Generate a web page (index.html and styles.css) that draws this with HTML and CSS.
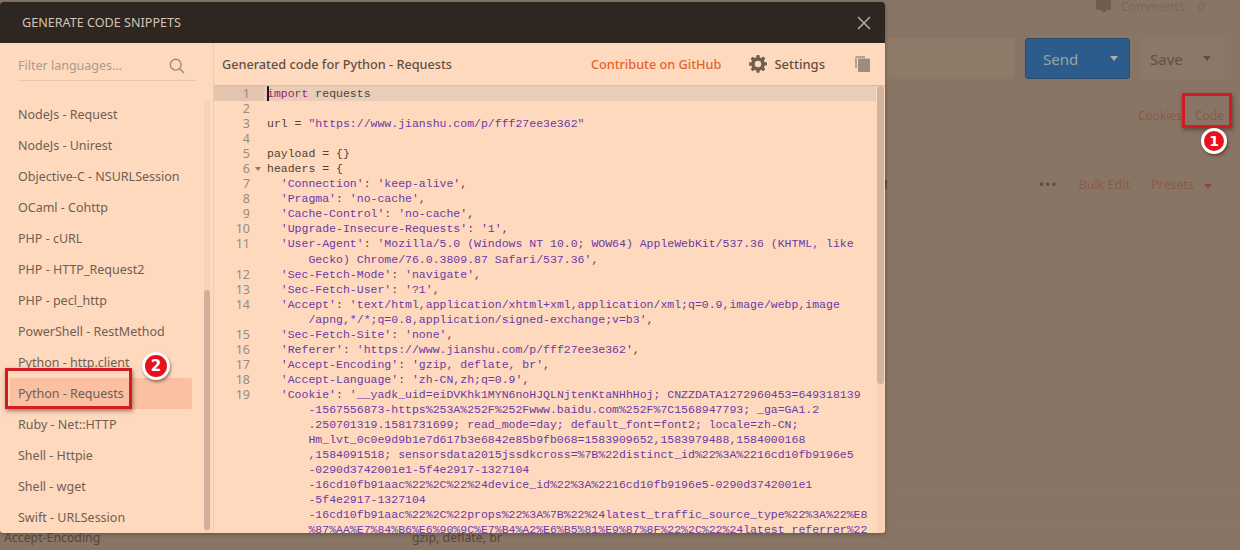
FILE: index.html
```html
<!DOCTYPE html>
<html lang="en">
<head>
<meta charset="utf-8">
<title>Generate code snippets</title>
<link rel="stylesheet" href="styles.css">
</head>
<body>
<div class="page">
  <div class="bg-comments">
    <svg class="bg-comment-icon" width="18" height="14" viewBox="0 0 18 14"><path d="M0 0h15v10l-4 0-3 3-3-3H0z" transform="translate(1 0)" fill="#6f5e50"/></svg>
    <span>Comments</span><span class="bg-count">0</span>
  </div>
  <div class="bg-actions">
    <div class="bg-url"></div>
    <div class="bg-send"><span>Send</span><i class="caret caret-light"></i></div>
    <div class="bg-save"><span>Save</span><i class="caret caret-dark"></i></div>
  </div>
  <div class="bg-links"><span>Cookies</span><span>Code</span></div>
  <div class="bg-tools">
    <i class="bg-sliver"></i><span class="bg-dots">•••</span><span>Bulk Edit</span><span class="bg-presets">Presets<i class="caret caret-red"></i></span>
  </div>
  <div class="bg-rule bg-rule-a"></div>
  <div class="bg-rule bg-rule-b"></div>
  <div class="bg-row"><span class="bg-key">Accept-Encoding</span><span>gzip, deflate, br</span></div>
</div>

<section class="modal">
  <header class="modal-head">
    <h1>GENERATE CODE SNIPPETS</h1>
    <svg class="close" width="14" height="14" viewBox="0 0 14 14"><path d="M1 1l12 12M13 1L1 13" stroke="#b7aca2" stroke-width="1.5" fill="none"/></svg>
  </header>
  <div class="modal-body">
    <aside class="side">
      <div class="filter">
        <span>Filter languages...</span>
        <svg width="16" height="16" viewBox="0 0 16 16"><circle cx="6.7" cy="6.7" r="5.4" fill="none" stroke="#9a8c80" stroke-width="1.4"/><path d="M10.7 10.7l4.3 4.3" stroke="#9a8c80" stroke-width="1.5"/></svg>
      </div>
      <div class="lang-wrap">
        <ul class="langs">
          <li>NodeJs - Request</li>
          <li>NodeJs - Unirest</li>
          <li>Objective-C - NSURLSession</li>
          <li>OCaml - Cohttp</li>
          <li>PHP - cURL</li>
          <li>PHP - HTTP_Request2</li>
          <li>PHP - pecl_http</li>
          <li>PowerShell - RestMethod</li>
          <li>Python - http.client</li>
          <li class="active">Python - Requests</li>
          <li>Ruby - Net::HTTP</li>
          <li>Shell - Httpie</li>
          <li>Shell - wget</li>
          <li>Swift - URLSession</li>
        </ul>
        <div class="side-scroll"><div class="side-thumb"></div></div>
      </div>
    </aside>
    <main class="main">
      <div class="main-head">
        <span class="gen-title">Generated code for Python - Requests</span>
        <a class="contrib">Contribute on GitHub</a>
        <span class="settings">
          <svg width="18" height="18" viewBox="0 0 18 18"><path fill="#6f5f52" fill-rule="evenodd" d="M7.6 0h2.8l.4 2.4 1.5.6 2-1.4 2 2-1.4 2 .6 1.5 2.4.4v2.8l-2.4.4-.6 1.5 1.4 2-2 2-2-1.4-1.5.6-.4 2.4H7.6l-.4-2.4-1.500-.6-2 1.400-2-2 1.400-2-.6-1.500L0 10.400V7.600l2.400-.4.6-1.500-1.400-2 2-2 2 1.400 1.500-.6zM9 5.800a3.200 3.200 0 1 0 0 6.400a3.200 3.200 0 0 0 0-6.400z"/></svg>
          <span>Settings</span>
        </span>
        <svg class="copy" width="15" height="16" viewBox="0 0 15 16"><path d="M3 0h8v2H3v10H1V2a2 2 0 0 1 2-2z" fill="#b5a392" transform="translate(-1 0)"/><rect x="3" y="2.500" width="12" height="13.500" rx="1" fill="#a08c7c"/></svg>
      </div>
      <div class="editor">
        <div class="code">
          <div class="ln current"><b>1</b><code><span class="cursor"></span><span class="kw">import</span> requests</code></div>
          <div class="ln"><b>2</b><code></code></div>
          <div class="ln"><b>3</b><code>url = <span class="str">"https://www.jianshu.com/p/fff27ee3e362"</span></code></div>
          <div class="ln"><b>4</b><code></code></div>
          <div class="ln"><b>5</b><code>payload = {}</code></div>
          <div class="ln fold"><b>6</b><code>headers = {</code></div>
          <div class="ln"><b>7</b><code>  <span class="str">'Connection'</span>: <span class="str">'keep-alive'</span>,</code></div>
          <div class="ln"><b>8</b><code>  <span class="str">'Pragma'</span>: <span class="str">'no-cache'</span>,</code></div>
          <div class="ln"><b>9</b><code>  <span class="str">'Cache-Control'</span>: <span class="str">'no-cache'</span>,</code></div>
          <div class="ln"><b>10</b><code>  <span class="str">'Upgrade-Insecure-Requests'</span>: <span class="str">'1'</span>,</code></div>
          <div class="ln"><b>11</b><code>  <span class="str">'User-Agent'</span>: <span class="str">'Mozilla/5.0 (Windows NT 10.0; WOW64) AppleWebKit/537.36 (KHTML, like</span></code></div>
          <div class="ln"><b></b><code>      <span class="str">Gecko) Chrome/76.0.3809.87 Safari/537.36'</span>,</code></div>
          <div class="ln"><b>12</b><code>  <span class="str">'Sec-Fetch-Mode'</span>: <span class="str">'navigate'</span>,</code></div>
          <div class="ln"><b>13</b><code>  <span class="str">'Sec-Fetch-User'</span>: <span class="str">'?1'</span>,</code></div>
          <div class="ln"><b>14</b><code>  <span class="str">'Accept'</span>: <span class="str">'text/html,application/xhtml+xml,application/xml;q=0.9,image/webp,image</span></code></div>
          <div class="ln"><b></b><code>      <span class="str">/apng,*/*;q=0.8,application/signed-exchange;v=b3'</span>,</code></div>
          <div class="ln"><b>15</b><code>  <span class="str">'Sec-Fetch-Site'</span>: <span class="str">'none'</span>,</code></div>
          <div class="ln"><b>16</b><code>  <span class="str">'Referer'</span>: <span class="str">'https://www.jianshu.com/p/fff27ee3e362'</span>,</code></div>
          <div class="ln"><b>17</b><code>  <span class="str">'Accept-Encoding'</span>: <span class="str">'gzip, deflate, br'</span>,</code></div>
          <div class="ln"><b>18</b><code>  <span class="str">'Accept-Language'</span>: <span class="str">'zh-CN,zh;q=0.9'</span>,</code></div>
          <div class="ln"><b>19</b><code>  <span class="str">'Cookie'</span>: <span class="str">'__yadk_uid=eiDVKhk1MYN6noHJQLNjtenKtaNHhHoj; CNZZDATA1272960453=649318139</span></code></div>
          <div class="ln"><b></b><code>      <span class="str">-1567556873-https%253A%252F%252Fwww.baidu.com%252F%7C1568947793; _ga=GA1.2</span></code></div>
          <div class="ln"><b></b><code>      <span class="str">.250701319.1581731699; read_mode=day; default_font=font2; locale=zh-CN;</span></code></div>
          <div class="ln"><b></b><code>      <span class="str">Hm_lvt_0c0e9d9b1e7d617b3e6842e85b9fb068=1583909652,1583979488,1584000168</span></code></div>
          <div class="ln"><b></b><code>      <span class="str">,1584091518; sensorsdata2015jssdkcross=%7B%22distinct_id%22%3A%2216cd10fb9196e5</span></code></div>
          <div class="ln"><b></b><code>      <span class="str">-0290d3742001e1-5f4e2917-1327104</span></code></div>
          <div class="ln"><b></b><code>      <span class="str">-16cd10fb91aac%22%2C%22%24device_id%22%3A%2216cd10fb9196e5-0290d3742001e1</span></code></div>
          <div class="ln"><b></b><code>      <span class="str">-5f4e2917-1327104</span></code></div>
          <div class="ln"><b></b><code>      <span class="str">-16cd10fb91aac%22%2C%22props%22%3A%7B%22%24latest_traffic_source_type%22%3A%22%E8</span></code></div>
          <div class="ln"><b></b><code>      <span class="str">%87%AA%E7%84%B6%E6%90%9C%E7%B4%A2%E6%B5%81%E9%87%8F%22%2C%22%24latest_referrer%22</span></code></div>
        </div>
        <div class="code-scroll"><div class="code-thumb"></div></div>
      </div>
    </main>
  </div>
</section>

<div class="mark mark-code"></div>
<div class="badge badge-one">1</div>
<div class="mark mark-python"></div>
<div class="badge badge-two">2</div>
</body>
</html>
```
FILE: styles.css
```css
* { box-sizing: border-box; }
html, body { margin: 0; height: 100%; }
body {
  width: 1240px; height: 550px; overflow: hidden; position: relative;
  background: #887565; color: #5f4f43;
  font-family: "Noto Sans", "Open Sans", sans-serif; font-size: 12.5px;
}

/* dimmed page behind the modal */
.page { display: flex; flex-direction: column; height: 550px; padding-right: 15px; }
.bg-comments { display: flex; justify-content: flex-end; align-items: center; gap: 8px; height: 13px; color: #7a6858; font-size: 12.5px; padding-right: 20px; }
.bg-count { margin-left: 5px; }
.bg-actions { display: flex; justify-content: flex-end; gap: 10px; height: 41px; margin-top: 25px; }
.bg-url { width: 130px; background: #8e7a69; }
.bg-send, .bg-save { display: flex; align-items: center; justify-content: space-between; font-size: 15px; }
.bg-send { width: 105px; background: #2c5c8c; color: #9aa59f; border-radius: 3px; border: 1px solid #2a4c6e; padding: 0 11px 0 17px; }
.bg-save { width: 85px; background: #8c7868; color: #5f5045; border-radius: 3px; padding: 0 14px 0 10px; }
.caret { width: 0; height: 0; border: 4px solid transparent; border-bottom: 0; border-top-width: 5px; display: inline-block; }
.caret-light { border-top-color: #a9b0aa; }
.caret-dark { border-top-color: #5f5045; }
.caret-red { border-top-color: #8f4a3d; margin-left: 10px; }
.bg-links { display: flex; justify-content: flex-end; gap: 13px; color: #8a5a4c; margin-top: 28px; height: 18px; line-height: 18px; font-size: 12px; padding-right: 1px; }
.bg-tools { display: flex; justify-content: flex-end; align-items: center; gap: 21px; color: #8a5a4c; margin-top: 50px; height: 18px; font-size: 12.5px; padding-right: 13px; }
.bg-sliver { width: 2px; height: 9px; margin: 0 auto 0 885px; background: #5d4e42; }
.bg-dots { color: #5d4e42; font-size: 14px; letter-spacing: 1px; }
.bg-rule { height: 1px; background: #8c7969; margin: 0 -15px 0 860px; }
.bg-rule-a { margin-top: 295px; }
.bg-rule-b { margin-top: 33px; }
.bg-row { display: flex; margin-top: 6px; padding-left: 4px; color: #55473c; font-size: 12.3px; line-height: 18px; }
.bg-key { width: 408px; }

/* modal */
.modal {
  position: absolute; left: 0; top: 2px; width: 885px; height: 531px;
  display: flex; flex-direction: column; background: #ffd9bd;
  border-radius: 3px; overflow: hidden; box-shadow: 0 1px 4px rgba(50, 40, 30, .45);
}
.modal-head { height: 41px; flex: none; background: #2e2620; display: flex; align-items: center; justify-content: space-between; padding: 0 14px 0 22px; color: #d4c4b6; }
.modal-head h1 { margin: 0; font-size: 12.6px; font-weight: 400; }
.close { display: block; }
.modal-body { flex: 1; display: flex; min-height: 0; }

.side { width: 214px; flex: none; border-right: 1px solid #f0ccb2; display: flex; flex-direction: column; }
.filter { height: 37px; margin: 1px 17px 0 18px; flex: none; display: flex; align-items: center; justify-content: space-between; border-bottom: 1px solid #e8c7ae; color: #ab9a8c; padding-right: 11px; padding-top: 7px; }
.lang-wrap { flex: 1; min-height: 0; display: flex; padding-left: 10px; position: relative; }
.langs { list-style: none; margin: 18px 0 0; padding: 0; width: 182px; flex: none; }
.langs li { height: 31px; line-height: 31px; padding-left: 8px; color: #6f5f52; border-radius: 2px; }
.langs li.active { background: #fbc0a2; }
.side-scroll { width: 6px; margin-left: 12px; margin-top: 19px; background: #f7d2b7; }
.side-thumb { height: 240px; margin-top: 190px; background: #d0b09a; border-radius: 3px; }

.main { flex: 1; min-width: 0; display: flex; flex-direction: column; }
.main-head { height: 42px; flex: none; display: flex; align-items: center; padding: 0 15px 0 8px; color: #5f5045; box-shadow: 0 1px 1px #dcbda6; z-index: 1; }
.gen-title { font-weight: 500; font-size: 12.7px; }
.contrib { margin-left: auto; color: #e2642c; font-weight: 500; font-size: 12.7px; }
.settings { display: flex; align-items: center; gap: 7px; margin-left: 28px; font-weight: 500; font-size: 13px; }
.copy { margin-left: 30px; }

.editor { flex: 1; min-height: 0; display: flex; padding-top: 1px; overflow: hidden; }
.code { width: 662px; flex: none; font-family: "Liberation Mono", monospace; font-size: 11.5px; line-height: 15.05px; }
.ln { display: flex; height: 15.05px; }
.ln b { width: 36px; flex: none; text-align: right; font-weight: 400; color: #9c8b7d; font-family: "Noto Sans", sans-serif; font-size: 12.5px; }
.ln code { flex: 1; font: inherit; white-space: pre; margin-left: 17px; color: #4e4238; position: relative; }
.ln.current { background: #e8cdb9; }
.ln.current b { background: #e3c4ae; width: 50px; padding-right: 14px; }
.ln.current code { margin-left: 3px; }
.ln.fold { position: relative; }
.ln.fold::after { content: ""; position: absolute; left: 41px; top: 6px; border: 3px solid transparent; border-bottom: 0; border-top: 4px solid #8c7a6c; }
.str { color: #6a3aa8; }
.kw { color: #a3206a; }
.cursor { position: absolute; left: 0; top: 0; width: 2px; height: 15px; background: #1c1410; }
.code-scroll { width: 7px; margin: 0 0 0 1px; background: #f7d2b7; border-radius: 3px; }
.code-thumb { height: 298px; background: #d2b49d; border-radius: 3px; }

/* annotations over the screenshot */
.mark { position: absolute; border: 3px solid #d21c20; box-shadow: 1px 2px 4px rgba(60, 30, 20, .5); }
.mark-code { left: 1182px; top: 93px; width: 50px; height: 35px; }
.mark-python { left: 5px; top: 368px; width: 127px; height: 41px; }
.badge {
  position: absolute; width: 26px; height: 26px; border-radius: 50%;
  background: #e8101a; border: 3px solid #fff; color: #fff;
  font: 700 14px/20px "DejaVu Sans", sans-serif; text-align: center;
  box-shadow: 1px 2px 3px rgba(60, 30, 20, .5);
}
.badge-one { left: 1201px; top: 128px; }
.badge-two { left: 142px; top: 352px; width: 28px; height: 28px; line-height: 22px; font-size: 15px; }
```
